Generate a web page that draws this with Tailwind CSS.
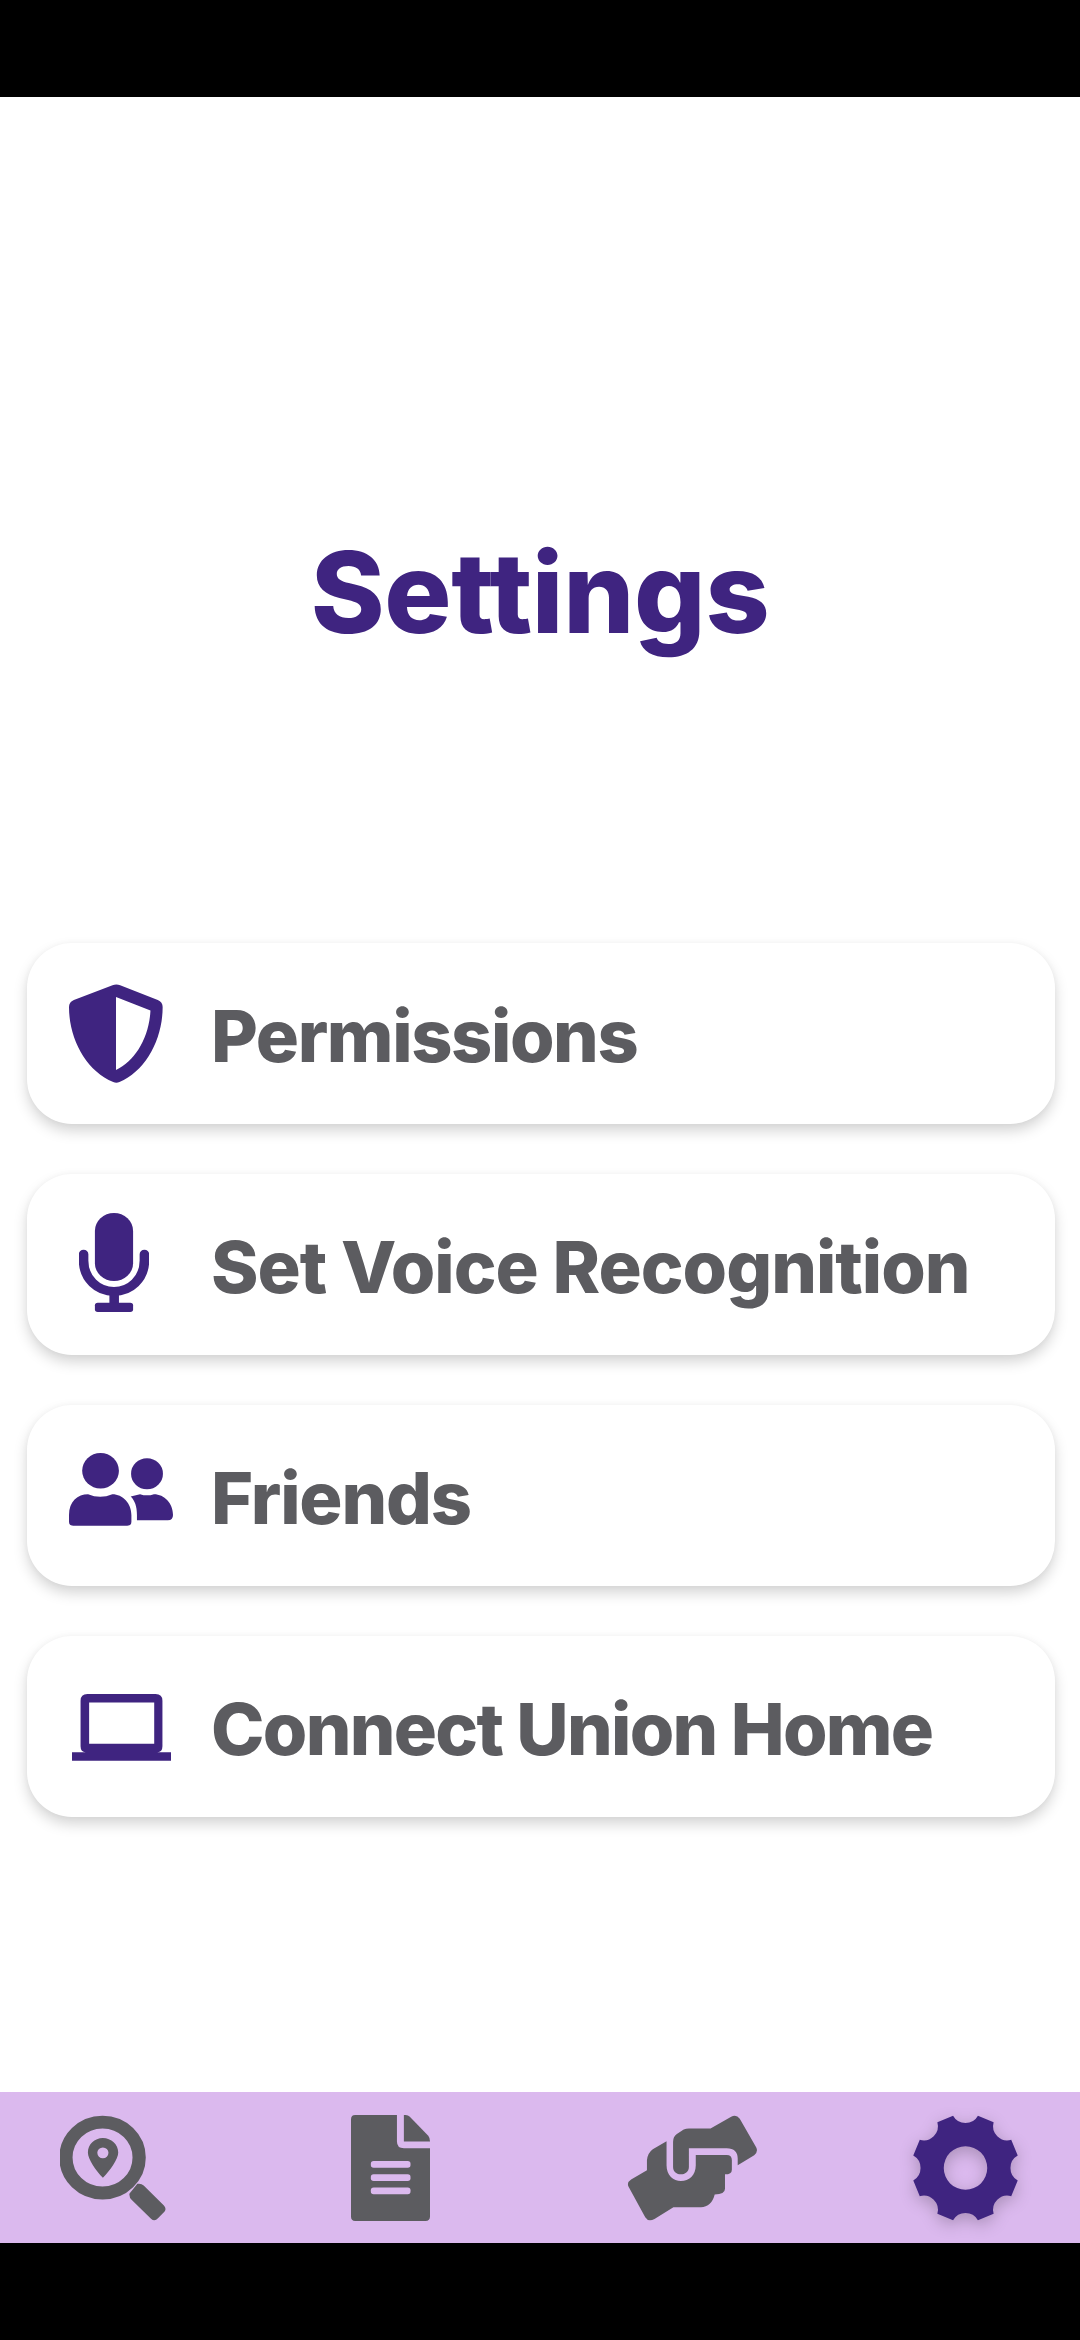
<!DOCTYPE html>
<html lang="en">
<head>
    <meta charset="UTF-8">
    <title>Settings</title>
    <script src="https://cdn.jsdelivr.net/npm/@tailwindcss/browser@4"></script>
</head>
<body class="bg-black font-['Inter',sans-serif]">
<div class="w-[1080px] h-[2340px] overflow-hidden flex flex-col">
    <div class="h-[97px] shrink-0 bg-black"></div>

    <main class="h-[2146px] shrink-0 bg-white flex flex-col">
        <h1 class="mt-[430px] h-[130px] text-center text-[112px] leading-[130px] font-extrabold tracking-[-0.3px] text-[#3f2480]">Settings</h1>

        <div class="mt-[286px] pl-[27px] pr-[25px] flex flex-col gap-[50px]">
            <!-- Permissions -->
            <div class="h-[181px] rounded-[45px] bg-white shadow-[0_7px_14px_rgba(0,0,0,0.17),0_0_6px_rgba(0,0,0,0.03)] flex items-center">
                <div class="w-[184px] pl-[42px] shrink-0">
                    <svg class="block" width="94" height="99" viewBox="200 193 270 298" preserveAspectRatio="none" fill="#3f2480"><path fill-rule="evenodd" d="M325 197Q336 192 347 197L455 241Q469 247 469 262C469 360 420 455 345 488Q336 492 327 488C250 455 200 360 200 262Q200 247 214 241ZM335 232V452C390 425 430 355 434 273Z"/></svg>
                </div>
                <span class="text-[72px] font-extrabold tracking-[-1.4px] text-[#5c5c60] mt-[4px]">Permissions</span>
            </div>
            <!-- Voice -->
            <div class="h-[181px] rounded-[45px] bg-white shadow-[0_7px_14px_rgba(0,0,0,0.17),0_0_6px_rgba(0,0,0,0.03)] flex items-center">
                <div class="w-[184px] pl-[52px] shrink-0 mb-[5px]">
                    <svg class="block" width="70" height="99" viewBox="232 877 198 298" preserveAspectRatio="none" fill="#3f2480"><rect x="277" y="877" width="108" height="205" rx="54"/><path d="M245 1001V1020C245 1075 285 1113 331 1113C377 1113 417 1075 417 1020V1001" fill="none" stroke="#3f2480" stroke-width="27" stroke-linecap="round"/><rect x="318" y="1115" width="27" height="40"/><rect x="277" y="1147" width="108" height="28" rx="8"/></svg>
                </div>
                <span class="text-[72px] font-extrabold tracking-[-1px] text-[#5c5c60] mt-[4px]">Set Voice Recognition</span>
            </div>
            <!-- Friends -->
            <div class="h-[181px] rounded-[45px] bg-white shadow-[0_7px_14px_rgba(0,0,0,0.17),0_0_6px_rgba(0,0,0,0.03)] flex items-center">
                <div class="w-[184px] pl-[42px] shrink-0 mb-[12px]">
                    <svg class="block" width="104" height="73" viewBox="200 220 300 218" preserveAspectRatio="none" fill="#3f2480"><circle cx="291" cy="273" r="53"/><circle cx="425" cy="282" r="46"/><path d="M200 405C200 365 225 343 255 343Q290 358 325 343C355 343 380 370 380 405V425Q380 437 368 437H212Q200 437 200 425Z"/><path d="M378 350L405 343Q425 350 445 343C475 343 500 370 500 405Q500 421 485 421H396V405C396 380 390 362 378 350Z"/></svg>
                </div>
                <span class="text-[72px] font-extrabold tracking-[-1.2px] text-[#5c5c60] mt-[4px]">Friends</span>
            </div>
            <!-- Union Home -->
            <div class="h-[181px] rounded-[45px] bg-white shadow-[0_7px_14px_rgba(0,0,0,0.17),0_0_6px_rgba(0,0,0,0.03)] flex items-center">
                <div class="w-[184px] pl-[45px] shrink-0 mt-[2px]">
                    <svg class="block" width="99" height="67" viewBox="206 940 289 199" preserveAspectRatio="none" fill="#3f2480"><path fill-rule="evenodd" d="M251 940H450Q470 940 470 960V1095Q470 1112 455 1113H495V1138H206V1113H246Q231 1112 231 1095V960Q231 940 251 940ZM256 965V1088H446V965Z"/></svg>
                </div>
                <span class="text-[72px] font-extrabold tracking-[-1.7px] text-[#5c5c60] mt-[4px]">Connect Union Home</span>
            </div>
        </div>

        <nav class="mt-auto h-[151px] shrink-0 bg-[#dbb9ee] flex items-center pl-[60px]">
            <svg class="shrink-0" width="106" height="106" viewBox="175 137 304 314" preserveAspectRatio="none" fill="#5c5c60">
                <circle cx="297" cy="263" r="105" fill="none" stroke="#5c5c60" stroke-width="38"/>
                <path fill-rule="evenodd" d="M298 205C322 205 342 224 342 248C342 268 318 302 298 323C278 302 255 268 255 248C255 224 274 205 298 205ZM298 233A15 15 0 1 0 298 265A15 15 0 1 0 298 233Z"/>
                <path d="M374 370L397 341Q408 339 415 346L473 405Q481 414 475 423L456 443Q446 454 436 444L381 389Q373 381 374 370Z"/>
            </svg>
            <svg class="shrink-0 ml-[185px]" width="79" height="106" viewBox="1018 137 227 313" preserveAspectRatio="none" fill="#5c5c60">
                <path d="M1030 137H1150V215Q1150 235 1170 235H1245V437Q1245 450 1232 450H1030Q1018 450 1018 437V150Q1018 137 1030 137Z"/>
                <path d="M1170 137H1175Q1182 137 1187 142L1240 198Q1245 204 1245 215H1170Z"/>
                <rect x="1075" y="273" width="114" height="20" rx="8" fill="#dbb9ee"/>
                <rect x="1075" y="312" width="114" height="20" rx="8" fill="#dbb9ee"/>
                <rect x="1075" y="351" width="114" height="20" rx="8" fill="#dbb9ee"/>
            </svg>
            <svg class="shrink-0 ml-[197px]" width="131" height="106" viewBox="250 135 381 316" preserveAspectRatio="none" fill="#5c5c60">
                <path d="M262 327L308 300V270Q310 248 325 237L365 213V285C365 315 385 332 407 332C430 332 450 315 450 285V254H540Q555 254 555 270V298Q555 312 535 312V355Q535 372 505 372C500 395 485 410 465 410H385L330 445Q312 455 303 440L255 350Q248 336 262 327Z"/>
                <path d="M384 215Q384 200 395 192L415 178Q422 175 430 175H493L553 140Q568 132 578 146L626 232Q632 245 620 255L572 285V265Q572 235 540 234H430V290C430 305 418 312 407 312C395 312 384 305 384 290Z"/>
            </svg>
            <svg class="shrink-0 ml-[154px] overflow-visible drop-shadow-[0_5px_8px_rgba(0,0,0,0.22)]" width="107" height="106" viewBox="-156 -156 312 312" fill="#3f2480">
                <path fill-rule="evenodd" d="M-36.6 -153.7A42 42 0 0 0 36.6 -153.7L82.8 -134.6A42 42 0 0 0 134.6 -82.8L153.7 -36.6A42 42 0 0 0 153.7 36.6L134.6 82.8A42 42 0 0 0 82.8 134.6L36.6 153.7A42 42 0 0 0 -36.6 153.7L-82.8 134.6A42 42 0 0 0 -134.6 82.8L-153.7 36.6A42 42 0 0 0 -153.7 -36.6L-134.6 -82.8A42 42 0 0 0 -82.8 -134.6ZM0 -64A64 64 0 1 0 0 64A64 64 0 1 0 0 -64Z"/>
            </svg>
        </nav>
    </main>

    <div class="flex-1 bg-black"></div>
</div>
</body>
</html>
